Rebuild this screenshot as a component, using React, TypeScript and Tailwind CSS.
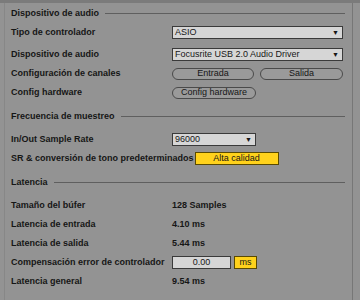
const font = { fontFamily: '"Liberation Sans", Arial, sans-serif' }

function Header({ title }: { title: string }) {
  return (
    <div className="flex h-[19px] items-center gap-[6px] pr-[8px]">
      <span>{title}</span>
      <div className="h-px flex-1 bg-[#5f5f5f]" />
    </div>
  )
}

function Row({ label, children }: { label: string; children?: React.ReactNode }) {
  return (
    <div className="flex h-[19px] items-center">
      <span className="w-[161px] shrink-0 whitespace-nowrap">{label}</span>
      {children}
    </div>
  )
}

function Select({ value, width }: { value: string; width: string }) {
  return (
    <div
      className={`flex h-[13px] items-center justify-between border border-[#3a3a3a] bg-[#d6d6d6] pl-[2px] pr-[3px] font-normal ${width}`}
    >
      <span>{value}</span>
      <span className="text-[7px]">▼</span>
    </div>
  )
}

function Pill({ label, width }: { label: string; width: string }) {
  return (
    <div
      className={`flex h-[12px] items-center justify-center rounded-full border border-[#4a4a4a] bg-[#9a9a9a] font-normal ${width}`}
    >
      {label}
    </div>
  )
}

export default function App() {
  return (
    <div
      className="relative h-[300px] w-[360px] overflow-hidden bg-[#939393] text-[9px] font-bold leading-none text-[#161616]"
      style={font}
    >
      <div className="absolute left-0 right-0 top-0 h-[3px] bg-[#7b7b7b]" />
      <div className="absolute bottom-0 left-[4px] top-[3px] w-px bg-[#878787]" />
      <div className="absolute bottom-0 right-[7px] top-[3px] w-px bg-[#777777]" />

      <div className="flex flex-col pl-[11px] pr-[7px] pt-[4px]">
        <Header title="Dispositivo de audio" />
        <Row label="Tipo de controlador">
          <Select value="ASIO" width="w-[171px]" />
        </Row>
        <div className="h-[3px]" />
        <Row label="Dispositivo de audio">
          <Select value="Focusrite USB 2.0 Audio Driver" width="w-[171px]" />
        </Row>
        <Row label="Configuración de canales">
          <div className="flex gap-[6px]">
            <Pill label="Entrada" width="w-[82px]" />
            <Pill label="Salida" width="w-[83px]" />
          </div>
        </Row>
        <Row label="Config hardware">
          <Pill label="Config hardware" width="w-[84px]" />
        </Row>
        <div className="h-[5px]" />
        <Header title="Frecuencia de muestreo" />
        <div className="h-[4px]" />
        <Row label="In/Out Sample Rate">
          <Select value="96000" width="w-[84px]" />
        </Row>
        <div className="flex h-[19px] items-center">
          <span className="whitespace-nowrap">SR &amp; conversión de tono predeterminados</span>
          <div className="ml-[1px] flex h-[13px] w-[84px] items-center justify-center border border-[#5a4a00] bg-[#ffd21c] font-normal">
            Alta calidad
          </div>
        </div>
        <div className="h-[5px]" />
        <Header title="Latencia" />
        <div className="h-[4px]" />
        <Row label="Tamaño del búfer">128 Samples</Row>
        <Row label="Latencia de entrada">4.10 ms</Row>
        <Row label="Latencia de salida">5.44 ms</Row>
        <Row label="Compensación error de controlador">
          <div className="flex h-[13px] w-[59px] items-center justify-center border border-[#3a3a3a] bg-[#d6d6d6] font-normal">
            0.00
          </div>
          <div className="ml-[3px] flex h-[13px] w-[23px] items-center justify-center border border-[#5a4a00] bg-[#ffd21c] font-normal">
            ms
          </div>
        </Row>
        <Row label="Latencia general">9.54 ms</Row>
        <div className="h-[5px]" />
        <Header title="Sync" />
      </div>
    </div>
  )
}
